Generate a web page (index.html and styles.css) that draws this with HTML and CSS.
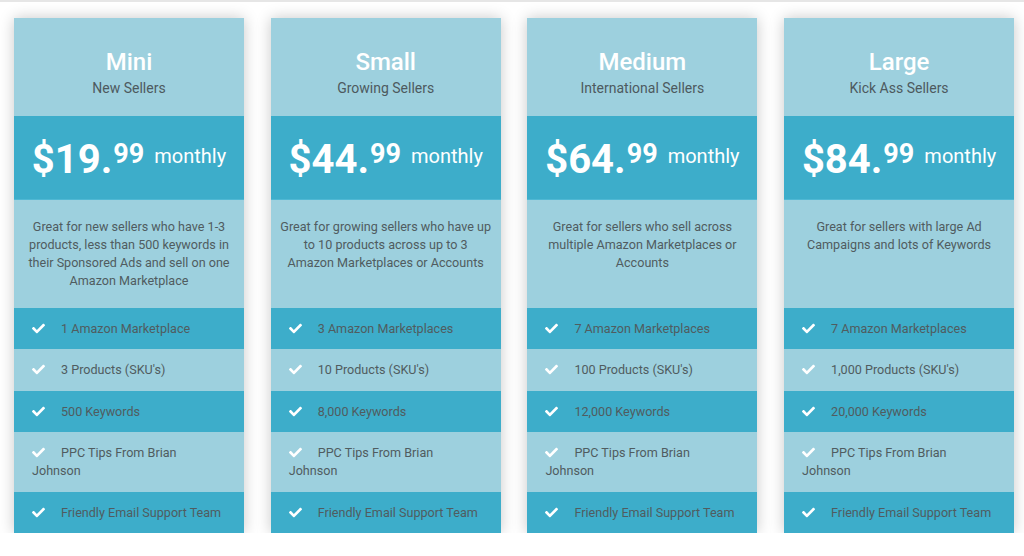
FILE: index.html
```html
<!DOCTYPE html>
<html lang="en">
<head>
<meta charset="utf-8">
<title>Pricing</title>
<link rel="stylesheet" href="styles.css">
</head>
<body>
<div class="topline"></div>
<main class="plans">
  <section class="card">
    <header class="head"><h2 class="name">Mini</h2><p class="sub">New Sellers</p></header>
    <div class="price"><span class="big">$19.</span><span class="cents">99</span><span class="per">monthly</span></div>
    <p class="desc">Great for new sellers who have 1-3 products, less than 500 keywords in their Sponsored Ads and sell on one Amazon Marketplace</p>
    <ul class="feats">
      <li class="dark"><svg class="chk" viewBox="0 0 512 512"><path d="M173.9 439.4L7.5 273c-10-10-10-26.2 0-36.2l36.2-36.2c10-10 26.2-10 36.2 0L192 312.7 432.1 72.6c10-10 26.2-10 36.2 0l36.2 36.2c10 10 10 26.2 0 36.2L210.1 439.4c-10 10-26.2 10-36.2 0z"/></svg>1 Amazon Marketplace</li>
      <li class="light"><svg class="chk" viewBox="0 0 512 512"><path d="M173.9 439.4L7.5 273c-10-10-10-26.2 0-36.2l36.2-36.2c10-10 26.2-10 36.2 0L192 312.7 432.1 72.6c10-10 26.2-10 36.2 0l36.2 36.2c10 10 10 26.2 0 36.2L210.1 439.4c-10 10-26.2 10-36.2 0z"/></svg>3 Products (SKU's)</li>
      <li class="dark"><svg class="chk" viewBox="0 0 512 512"><path d="M173.9 439.4L7.5 273c-10-10-10-26.2 0-36.2l36.2-36.2c10-10 26.2-10 36.2 0L192 312.7 432.1 72.6c10-10 26.2-10 36.2 0l36.2 36.2c10 10 10 26.2 0 36.2L210.1 439.4c-10 10-26.2 10-36.2 0z"/></svg>500 Keywords</li>
      <li class="light"><svg class="chk" viewBox="0 0 512 512"><path d="M173.9 439.4L7.5 273c-10-10-10-26.2 0-36.2l36.2-36.2c10-10 26.2-10 36.2 0L192 312.7 432.1 72.6c10-10 26.2-10 36.2 0l36.2 36.2c10 10 10 26.2 0 36.2L210.1 439.4c-10 10-26.2 10-36.2 0z"/></svg>PPC Tips From Brian Johnson</li>
      <li class="dark"><svg class="chk" viewBox="0 0 512 512"><path d="M173.9 439.4L7.5 273c-10-10-10-26.2 0-36.2l36.2-36.2c10-10 26.2-10 36.2 0L192 312.7 432.1 72.6c10-10 26.2-10 36.2 0l36.2 36.2c10 10 10 26.2 0 36.2L210.1 439.4c-10 10-26.2 10-36.2 0z"/></svg>Friendly Email Support Team</li>
    </ul>
  </section>
  <section class="card">
    <header class="head"><h2 class="name">Small</h2><p class="sub">Growing Sellers</p></header>
    <div class="price"><span class="big">$44.</span><span class="cents">99</span><span class="per">monthly</span></div>
    <p class="desc">Great for growing sellers who have up to 10 products across up to 3 Amazon Marketplaces or Accounts</p>
    <ul class="feats">
      <li class="dark"><svg class="chk" viewBox="0 0 512 512"><path d="M173.9 439.4L7.5 273c-10-10-10-26.2 0-36.2l36.2-36.2c10-10 26.2-10 36.2 0L192 312.7 432.1 72.6c10-10 26.2-10 36.2 0l36.2 36.2c10 10 10 26.2 0 36.2L210.1 439.4c-10 10-26.2 10-36.2 0z"/></svg>3 Amazon Marketplaces</li>
      <li class="light"><svg class="chk" viewBox="0 0 512 512"><path d="M173.9 439.4L7.5 273c-10-10-10-26.2 0-36.2l36.2-36.2c10-10 26.2-10 36.2 0L192 312.7 432.1 72.6c10-10 26.2-10 36.2 0l36.2 36.2c10 10 10 26.2 0 36.2L210.1 439.4c-10 10-26.2 10-36.2 0z"/></svg>10 Products (SKU's)</li>
      <li class="dark"><svg class="chk" viewBox="0 0 512 512"><path d="M173.9 439.4L7.5 273c-10-10-10-26.2 0-36.2l36.2-36.2c10-10 26.2-10 36.2 0L192 312.7 432.1 72.6c10-10 26.2-10 36.2 0l36.2 36.2c10 10 10 26.2 0 36.2L210.1 439.4c-10 10-26.2 10-36.2 0z"/></svg>8,000 Keywords</li>
      <li class="light"><svg class="chk" viewBox="0 0 512 512"><path d="M173.9 439.4L7.5 273c-10-10-10-26.2 0-36.2l36.2-36.2c10-10 26.2-10 36.2 0L192 312.7 432.1 72.6c10-10 26.2-10 36.2 0l36.2 36.2c10 10 10 26.2 0 36.2L210.1 439.4c-10 10-26.2 10-36.2 0z"/></svg>PPC Tips From Brian Johnson</li>
      <li class="dark"><svg class="chk" viewBox="0 0 512 512"><path d="M173.9 439.4L7.5 273c-10-10-10-26.2 0-36.2l36.2-36.2c10-10 26.2-10 36.2 0L192 312.7 432.1 72.6c10-10 26.2-10 36.2 0l36.2 36.2c10 10 10 26.2 0 36.2L210.1 439.4c-10 10-26.2 10-36.2 0z"/></svg>Friendly Email Support Team</li>
    </ul>
  </section>
  <section class="card">
    <header class="head"><h2 class="name">Medium</h2><p class="sub">International Sellers</p></header>
    <div class="price"><span class="big">$64.</span><span class="cents">99</span><span class="per">monthly</span></div>
    <p class="desc">Great for sellers who sell across multiple Amazon Marketplaces or Accounts</p>
    <ul class="feats">
      <li class="dark"><svg class="chk" viewBox="0 0 512 512"><path d="M173.9 439.4L7.5 273c-10-10-10-26.2 0-36.2l36.2-36.2c10-10 26.2-10 36.2 0L192 312.7 432.1 72.6c10-10 26.2-10 36.2 0l36.2 36.2c10 10 10 26.2 0 36.2L210.1 439.4c-10 10-26.2 10-36.2 0z"/></svg>7 Amazon Marketplaces</li>
      <li class="light"><svg class="chk" viewBox="0 0 512 512"><path d="M173.9 439.4L7.5 273c-10-10-10-26.2 0-36.2l36.2-36.2c10-10 26.2-10 36.2 0L192 312.7 432.1 72.6c10-10 26.2-10 36.2 0l36.2 36.2c10 10 10 26.2 0 36.2L210.1 439.4c-10 10-26.2 10-36.2 0z"/></svg>100 Products (SKU's)</li>
      <li class="dark"><svg class="chk" viewBox="0 0 512 512"><path d="M173.9 439.4L7.5 273c-10-10-10-26.2 0-36.2l36.2-36.2c10-10 26.2-10 36.2 0L192 312.7 432.1 72.6c10-10 26.2-10 36.2 0l36.2 36.2c10 10 10 26.2 0 36.2L210.1 439.4c-10 10-26.2 10-36.2 0z"/></svg>12,000 Keywords</li>
      <li class="light"><svg class="chk" viewBox="0 0 512 512"><path d="M173.9 439.4L7.5 273c-10-10-10-26.2 0-36.2l36.2-36.2c10-10 26.2-10 36.2 0L192 312.7 432.1 72.6c10-10 26.2-10 36.2 0l36.2 36.2c10 10 10 26.2 0 36.2L210.1 439.4c-10 10-26.2 10-36.2 0z"/></svg>PPC Tips From Brian Johnson</li>
      <li class="dark"><svg class="chk" viewBox="0 0 512 512"><path d="M173.9 439.4L7.5 273c-10-10-10-26.2 0-36.2l36.2-36.2c10-10 26.2-10 36.2 0L192 312.7 432.1 72.6c10-10 26.2-10 36.2 0l36.2 36.2c10 10 10 26.2 0 36.2L210.1 439.4c-10 10-26.2 10-36.2 0z"/></svg>Friendly Email Support Team</li>
    </ul>
  </section>
  <section class="card">
    <header class="head"><h2 class="name">Large</h2><p class="sub">Kick Ass Sellers</p></header>
    <div class="price"><span class="big">$84.</span><span class="cents">99</span><span class="per">monthly</span></div>
    <p class="desc">Great for sellers with large Ad Campaigns and lots of Keywords</p>
    <ul class="feats">
      <li class="dark"><svg class="chk" viewBox="0 0 512 512"><path d="M173.9 439.4L7.5 273c-10-10-10-26.2 0-36.2l36.2-36.2c10-10 26.2-10 36.2 0L192 312.7 432.1 72.6c10-10 26.2-10 36.2 0l36.2 36.2c10 10 10 26.2 0 36.2L210.1 439.4c-10 10-26.2 10-36.2 0z"/></svg>7 Amazon Marketplaces</li>
      <li class="light"><svg class="chk" viewBox="0 0 512 512"><path d="M173.9 439.4L7.5 273c-10-10-10-26.2 0-36.2l36.2-36.2c10-10 26.2-10 36.2 0L192 312.7 432.1 72.6c10-10 26.2-10 36.2 0l36.2 36.2c10 10 10 26.2 0 36.2L210.1 439.4c-10 10-26.2 10-36.2 0z"/></svg>1,000 Products (SKU's)</li>
      <li class="dark"><svg class="chk" viewBox="0 0 512 512"><path d="M173.9 439.4L7.5 273c-10-10-10-26.2 0-36.2l36.2-36.2c10-10 26.2-10 36.2 0L192 312.7 432.1 72.6c10-10 26.2-10 36.2 0l36.2 36.2c10 10 10 26.2 0 36.2L210.1 439.4c-10 10-26.2 10-36.2 0z"/></svg>20,000 Keywords</li>
      <li class="light"><svg class="chk" viewBox="0 0 512 512"><path d="M173.9 439.4L7.5 273c-10-10-10-26.2 0-36.2l36.2-36.2c10-10 26.2-10 36.2 0L192 312.7 432.1 72.6c10-10 26.2-10 36.2 0l36.2 36.2c10 10 10 26.2 0 36.2L210.1 439.4c-10 10-26.2 10-36.2 0z"/></svg>PPC Tips From Brian Johnson</li>
      <li class="dark"><svg class="chk" viewBox="0 0 512 512"><path d="M173.9 439.4L7.5 273c-10-10-10-26.2 0-36.2l36.2-36.2c10-10 26.2-10 36.2 0L192 312.7 432.1 72.6c10-10 26.2-10 36.2 0l36.2 36.2c10 10 10 26.2 0 36.2L210.1 439.4c-10 10-26.2 10-36.2 0z"/></svg>Friendly Email Support Team</li>
    </ul>
  </section>
</main>
</body>
</html>
```
FILE: styles.css
```css
* { box-sizing: border-box; }
html, body { margin: 0; padding: 0; background: #ffffff; }
body { font-family: Roboto, "Open Sans", Arial, sans-serif; color: #555; }
.topline { height: 2px; background: #e6e6e6; }
.plans {
  display: grid;
  grid-template-columns: repeat(4, 230px);
  column-gap: 26.7px;
  padding: 16px 0 0 14px;
}
.card {
  display: flex;
  flex-direction: column;
  background: #9dd0de;
  box-shadow: 0 0 14px rgba(0, 0, 0, 0.22);
}
.head { text-align: center; padding: 30px 10px 18px; }
.name { margin: 0; font-size: 24px; line-height: 28px; font-weight: 500; color: #fff; }
.sub { margin: 2px 0 0; font-size: 14px; line-height: 20px; color: #4d5a5e; }
.price {
  background: #3dadca;
  height: 84px;
  padding-top: 16px;
  text-align: center;
  color: #fff;
  white-space: nowrap;
  border-bottom: 1px solid #4fb8d4;
}
.big { font-size: 40px; font-weight: 700; line-height: 56px; }
.cents { font-size: 27px; font-weight: 700; vertical-align: 10px; margin-left: 1px; }
.per { font-size: 20px; vertical-align: 10px; margin-left: 10px; }
.desc {
  margin: 0;
  height: 108px;
  padding: 18px 9.5px 0;
  text-align: center;
  font-size: 12.6px;
  line-height: 18px;
  color: #505c60;
}
.feats { list-style: none; margin: 0; padding: 0; }
.feats li {
  padding: 12px 18px 11px;
  font-size: 12.6px;
  line-height: 18px;
  color: #505c60;
}
.feats li:nth-child(2) { padding-bottom: 12px; }
.feats li:nth-child(4) { padding-bottom: 12px; }
.feats .dark { background: #3dadca; }
.feats .light { background: #9dd0de; }
.chk {
  width: 13px;
  height: 13px;
  fill: #fff;
  vertical-align: -2px;
  margin-right: 16px;
}
```
